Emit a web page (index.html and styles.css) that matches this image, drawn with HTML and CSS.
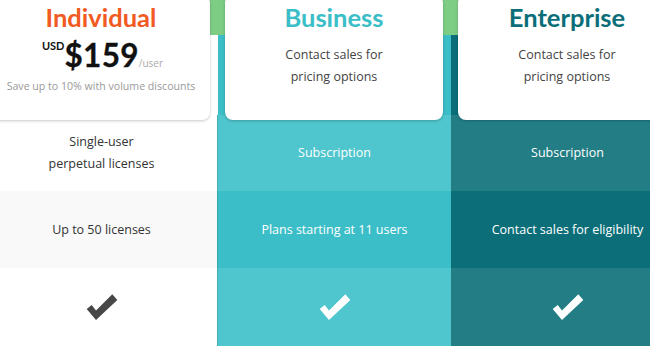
FILE: index.html
```html
<!DOCTYPE html>
<html lang="en">
<head>
<meta charset="utf-8">
<title>Pricing</title>
<link rel="stylesheet" href="styles.css">
</head>
<body>
<div class="table">
  <div class="col col-ind">
    <div class="head">
      <div class="card">
        <h2 class="title">Individual</h2>
        <div class="price"><span class="cur">USD</span><span class="amt">$159</span><span class="per">/user</span></div>
        <p class="save">Save up to 10% with volume discounts</p>
      </div>
    </div>
    <div class="row r1"><span>Single-user<br>perpetual licenses</span></div>
    <div class="row r2"><span>Up to 50 licenses</span></div>
    <div class="row r3"><svg class="check" viewBox="0 0 32 28" width="32" height="28"><polygon points="0.7,16 5.7,12 10,17.5 26.3,1.3 31.3,7 10,27"/></svg></div>
  </div>
  <div class="col col-bus">
    <div class="head">
      <div class="card">
        <h2 class="title">Business</h2>
        <p class="contact">Contact sales for<br>pricing options</p>
      </div>
    </div>
    <div class="row r1"><span>Subscription</span></div>
    <div class="row r2"><span>Plans starting at 11 users</span></div>
    <div class="row r3"><svg class="check" viewBox="0 0 32 28" width="32" height="28"><polygon points="0.7,16 5.7,12 10,17.5 26.3,1.3 31.3,7 10,27"/></svg></div>
  </div>
  <div class="col col-ent">
    <div class="head">
      <div class="card">
        <h2 class="title">Enterprise</h2>
        <p class="contact">Contact sales for<br>pricing options</p>
      </div>
    </div>
    <div class="row r1"><span>Subscription</span></div>
    <div class="row r2"><span>Contact sales for eligibility</span></div>
    <div class="row r3"><svg class="check" viewBox="0 0 32 28" width="32" height="28"><polygon points="0.7,16 5.7,12 10,17.5 26.3,1.3 31.3,7 10,27"/></svg></div>
  </div>
</div>
</body>
</html>
```
FILE: styles.css
```css
html, body {
  margin: 0;
  padding: 0;
  background: #ffffff;
  overflow: hidden;
}
body {
  font-family: "Open Sans", "Liberation Sans", sans-serif;
  width: 650px;
  height: 347px;
}
.table {
  display: grid;
  grid-template-columns: 233px 233px 233px;
  margin-left: -15px;
  margin-top: -5px;
}
.col {
  display: flex;
  flex-direction: column;
}
.head {
  height: 120px;
  padding: 0 8px 0 7px;
  position: relative;
  z-index: 1;
}
.col-ind .head { background: linear-gradient(#7dcd85 0 40px, #ffffff 40px); }
.col-bus .head { background: linear-gradient(#7dcd85 0 40px, #3bbec7 40px); }
.col-ent .head { background: linear-gradient(#7dcd85 0 40px, #0b6e79 40px); }

.card {
  height: 125px;
  background: #ffffff;
  border-radius: 8px;
  box-shadow: 0 1px 3px rgba(0, 0, 0, 0.22);
  display: flex;
  flex-direction: column;
  align-items: center;
  padding-top: 7px;
  box-sizing: border-box;
}
.title {
  margin: 0;
  font-family: Lato, "Liberation Sans", sans-serif;
  font-weight: 700;
  font-size: 25.5px;
  line-height: 30px;
}
.col-ind .title { color: #f15a22; }
.col-bus .title { color: #3bbec7; }
.col-ent .title { color: #0b6e79; }

.price {
  margin-top: 7px;
  padding-left: 3px;
  font-family: Lato, "Liberation Sans", sans-serif;
  font-size: 30px;
  line-height: 32px;
  height: 32px;
  white-space: nowrap;
}
.cur {
  font-weight: 700;
  font-size: 11px;
  line-height: 1;
  color: #111;
  vertical-align: 17px;
}
.amt {
  font-weight: 700;
  font-size: 31.5px;
  color: #111;
  letter-spacing: 0.3px;
  -webkit-text-stroke: 0.3px #111;
}
.per {
  font-family: "Open Sans", "Liberation Sans", sans-serif;
  font-size: 10px;
  line-height: 1;
  color: #aaaaaa;
}
.save {
  margin: 7px 0 0;
  font-size: 10.6px;
  line-height: 16px;
  color: #9a9a9a;
  white-space: nowrap;
}
.contact {
  margin: 12px 0 0;
  font-size: 12.5px;
  line-height: 22px;
  color: #444;
  text-align: center;
}
.row {
  display: flex;
  align-items: center;
  justify-content: center;
  text-align: center;
  font-size: 12.5px;
  line-height: 22px;
}
.row.r1 { height: 76px; }
.row.r2 { height: 77px; }
.row.r3 { height: 78px; }

.col-ind .row { color: #333; }
.col-ind .r2 { background: #f9f9f9; }
.col-ind .check { fill: #474747; }

.col-bus .row { color: #ffffff; border-left: 1px solid rgba(0,0,0,0.12); margin-left: -1px; }
.col-bus .r1, .col-bus .r3 { background: #4fc5cd; }
.col-bus .r2 { background: #3bbec7; }
.col-bus .check { fill: #ffffff; }

.col-ent .row { color: #ffffff; }
.col-ent .r1, .col-ent .r3 { background: #227d85; }
.col-ent .r2 { background: #0b6e79; }
.col-ent .check { fill: #ffffff; }
```
